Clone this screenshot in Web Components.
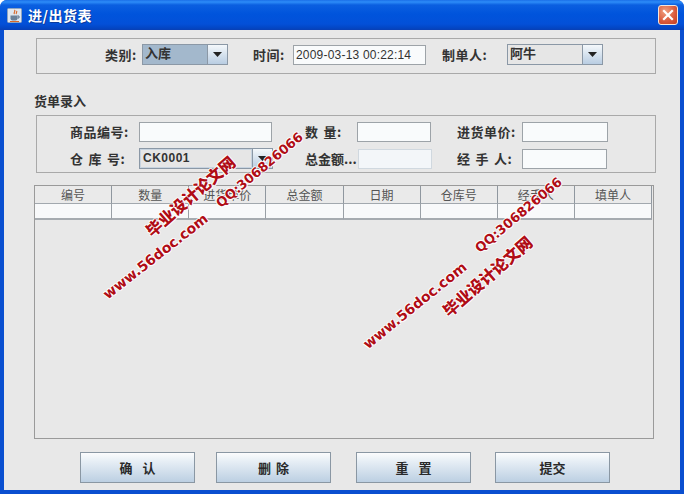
<!DOCTYPE html>
<html lang="zh">
<head>
<meta charset="utf-8">
<title>进/出货表</title>
<style>
  html, body { margin: 0; height: 100%; background: #fff; overflow: hidden; }
  body { font-family: "Noto Sans CJK SC", "Liberation Sans", sans-serif; font-size: 12px; color: #222; }

  /* where things sit in the form */
  .top-panel { margin: 8px 0 0 32px; width: 620px; height: 36px; padding-bottom: 3px;
    grid-template-columns: 68px 37px 86px 25px 40px 133px 16px 65px 96px; align-items: center; }
  .heading { margin: 19px 0 0 30px; font-weight: 700; font-size: 13px; line-height: 16px; color: #333; display: block; }
  .entry-panel { margin: 6px 0 0 32px; width: 620px; height: 58px; padding-top: 6px; row-gap: 6px; align-content: start;
    grid-template-columns: 33px 69px 134px 32px 52px 74px 26px 65px 86px; align-items: center; }
  .entry-panel > :first-child, .entry-panel > .r2 { grid-column-start: 2; }
  erp-table { margin: 12px 0 0 30px; width: 620px; height: 254px; }
  .actions { display: grid; grid-template-columns: 136px 140px 139px 115px; margin: 13px 0 0 76px; }
</style>
</head>
<body>
<erp-window caption="进/出货表">
  <erp-panel class="top-panel">
    <span></span>
    <erp-label>类别:</erp-label>
    <erp-combo arrow selected>入库</erp-combo>
    <span></span>
    <erp-label>时间:</erp-label>
    <erp-field mono>2009-03-13 00:22:14</erp-field>
    <span></span>
    <erp-label>制单人:</erp-label>
    <erp-combo arrow>阿牛</erp-combo>
  </erp-panel>

  <span class="heading">货单录入</span>

  <erp-panel class="entry-panel">
    <erp-label>商品编号:</erp-label>
    <erp-field style="width:133px"></erp-field>
    <span></span>
    <erp-label>数 量:</erp-label>
    <erp-field style="width:74px"></erp-field>
    <span></span>
    <erp-label>进货单价:</erp-label>
    <erp-field style="width:86px"></erp-field>

    <erp-label class="r2">仓 库 号:</erp-label>
    <erp-combo arrow plain style="width:134px">CK0001</erp-combo>
    <span></span>
    <erp-label style="--ls:0">总金额...</erp-label>
    <erp-field disabled style="width:74px;margin-left:1px"></erp-field>
    <span></span>
    <erp-label>经 手 人:</erp-label>
    <erp-field style="width:85px"></erp-field>
  </erp-panel>

  <erp-table columns="编号,数量,进货单价,总金额,日期,仓库号,经手人,填单人"></erp-table>

  <div class="actions">
    <erp-button>确  认</erp-button>
    <erp-button>删 除</erp-button>
    <erp-button>重  置</erp-button>
    <erp-button>提交</erp-button>
  </div>
</erp-window>

<erp-watermark x="148" y="233" size="16" angle="41" cjk>毕业设计论文网</erp-watermark>
<erp-watermark x="218" y="205" size="13" angle="40" bold>QQ:306826066</erp-watermark>
<erp-watermark x="105" y="296" size="14" angle="38" bold>www.56doc.com</erp-watermark>
<erp-watermark x="365" y="346" size="14" angle="39" bold>www.56doc.com</erp-watermark>
<erp-watermark x="477" y="250" size="13" angle="40" bold>QQ:306826066</erp-watermark>
<erp-watermark x="445" y="313" size="16" angle="41" cjk>毕业设计论文网</erp-watermark>

<script>
class ErpWindow extends HTMLElement {
  connectedCallback() {
    this.attachShadow({ mode: 'open' }).innerHTML = `
      <style>
        :host { display: flex; flex-direction: column; width: 684px; height: 494px; box-sizing: border-box;
          border-radius: 7px 7px 0 0; overflow: hidden; background: #0a4fd0; }
        .bar { display: flex; align-items: center; height: 30px; flex: none; padding: 0 6px 0 7px; gap: 6px;
          background: linear-gradient(#1b6fe8 0, #2d8cf8 2px, #0b5fe0 5px, #0054dc 14px, #0350d8 24px, #0346c4 28px, #0a3fb4 30px); }
        .title { color: #fff; font-weight: 700; font-size: 14px; letter-spacing: .5px; line-height: 16px; flex: 1; text-shadow: 1px 1px 0 #0a3a9c; }
        .close { width: 20px; height: 20px; box-sizing: border-box; border: 1px solid #f4e6dc; border-radius: 3px;
          background: radial-gradient(circle at 35% 30%, #f0a080, #d9583a 60%, #c23f20); display: grid; place-items: center; }
        .body { flex: 1; display: flex; flex-direction: column; margin: 0 4px 4px; background: #e8e8e8; min-height: 0; }
      </style>
      <div class="bar">
        <svg width="15" height="15" viewBox="0 0 15 15">
          <rect x="0.500" y="0.500" width="14" height="14" rx="1" fill="#dfe6ee" stroke="#8ea4c0"/>
          <path d="M7.500 2c1.500 1.500-1.500 2.500 0 4M9.500 3c1 1-1 2 0 3" fill="none" stroke="#d8692a" stroke-width="1.200"/>
          <path d="M3.500 7.500h7v3a2 2 0 0 1-2 2h-3a2 2 0 0 1-2-2z" fill="#6c8198"/>
          <path d="M10.500 8h1.500v2h-1.500" fill="none" stroke="#5a6f86"/>
          <path d="M3 13.500h9" stroke="#d8692a"/>
        </svg>
        <div class="title"></div>
        <div class="close">
          <svg width="12" height="12" viewBox="0 0 12 12"><path d="M2 2l8 8M10 2l-8 8" stroke="#fff" stroke-width="2.200" stroke-linecap="square"/></svg>
        </div>
      </div>
      <div class="body"><slot></slot></div>`;
    this.shadowRoot.querySelector('.title').textContent = this.getAttribute('caption');
  }
}

class ErpPanel extends HTMLElement {
  connectedCallback() {
    this.attachShadow({ mode: 'open' }).innerHTML = `
      <style>
        :host { display: grid; box-sizing: border-box; border: 1px solid #a9a9a9; }
      </style>
      <slot></slot>`;
  }
}

class ErpLabel extends HTMLElement {
  connectedCallback() {
    this.attachShadow({ mode: 'open' }).innerHTML = `
      <style>
        :host { display: block; font-size: 13px; font-weight: 700; color: #333; line-height: 16px; }
        span { white-space: pre; letter-spacing: var(--ls, .5px); word-spacing: 1.500px; }
      </style>
      <span><slot></slot></span>`;
  }
}

class ErpField extends HTMLElement {
  connectedCallback() {
    this.attachShadow({ mode: 'open' }).innerHTML = `
      <style>
        :host { display: block; box-sizing: border-box; height: 20px; padding: 0 2px; border: 1px solid #9da3a8;
          background: #f9fbfc; font: 12px/18px "Liberation Sans", sans-serif; color: #333; letter-spacing: .2px; }
        :host([disabled]) { border-color: #d0d8df; background: #f3f6f9; }
      </style>
      <slot></slot>`;
  }
}

class ErpCombo extends HTMLElement {
  connectedCallback() {
    this.attachShadow({ mode: 'open' }).innerHTML = `
      <style>
        :host { display: flex; box-sizing: border-box; height: 21px; border: 1px solid #8b98a6; background: #e6e6e6; }
        :host([selected]) .value { background: #a3b8cc; }
        :host([plain]) .value { font-family: "Liberation Sans", sans-serif; font-size: 12px; letter-spacing: .5px; border: 1px solid #c8d4e0; line-height: 17px; }
        .value { flex: 1; min-width: 0; padding: 0 2px; font-size: 13px; font-weight: 700; line-height: 16px; color: #333; }
        .btn { flex: none; width: 19px; border-left: 1px solid #8b98a6; display: grid; place-items: center;
          background: linear-gradient(#f4f8fb, #b9cde2); }
      </style>
      <div class="value"><slot></slot></div>
      <div class="btn"><svg width="9" height="5" viewBox="0 0 9 5"><path d="M0 0h9L4.500 5z" fill="#222"/></svg></div>`;
  }
}

class ErpTable extends HTMLElement {
  connectedCallback() {
    const cols = this.getAttribute('columns').split(',');
    const cells = cols.map((c) => `<div class="head">${c}</div>`).join('');
    const blanks = cols.map(() => '<div class="cell"></div>').join('');
    this.attachShadow({ mode: 'open' }).innerHTML = `
      <style>
        :host { display: block; box-sizing: border-box; border: 1px solid #9a9a9a; background: #e8e8e8; }
        .grid { display: grid; grid-template-columns: repeat(8, 77.125px); grid-template-rows: 18px 16px; }
        .head { box-sizing: border-box; border-right: 1px solid #8f979f; border-bottom: 1px solid #a2a8ae;
          background: #eaeaea; text-align: center; font-size: 12px; line-height: 17px; color: #555; }
        .cell { box-sizing: border-box; border-right: 1px solid #9aa0a6; border-bottom: 2px solid #a6abb0; background: #f8f9fa; }
      </style>
      <div class="grid">${cells}${blanks}</div>`;
  }
}

class ErpButton extends HTMLElement {
  connectedCallback() {
    this.attachShadow({ mode: 'open' }).innerHTML = `
      <style>
        :host { display: flex; align-items: center; justify-content: center; box-sizing: border-box; width: 115px; height: 31px;
          border: 1px solid #8a97a3; background: linear-gradient(#fbfcfd 0, #e6eef5 30%, #bccfe2 100%);
          font-size: 13px; font-weight: 700; color: #2a2a2a; }
        span { white-space: pre; word-spacing: 2px; }
      </style>
      <span><slot></slot></span>`;
  }
}

// red stamp text lying over the finished window
class ErpWatermark extends HTMLElement {
  connectedCallback() {
    const size = this.getAttribute('size');
    this.attachShadow({ mode: 'open' }).innerHTML = `
      <style>
        :host { position: absolute; left: ${this.getAttribute('x')}px; top: ${this.getAttribute('y')}px;
          transform-origin: 0 50%; transform: translateY(-50%) rotate(-${this.getAttribute('angle')}deg); white-space: nowrap; pointer-events: none;
          font: ${size}px/1.2 "DejaVu Sans", sans-serif; color: #b00d16;
          text-shadow: 1px 0 0 #fff, -1px 0 0 #fff, 0 1px 0 #fff, 0 -1px 0 #fff; }
        :host([bold]) { font-weight: 700; }
        :host([cjk]) { font-family: "Noto Sans CJK SC", sans-serif; font-weight: 900; }
      </style>
      <slot></slot>`;
  }
}

customElements.define('erp-window', ErpWindow);
customElements.define('erp-panel', ErpPanel);
customElements.define('erp-label', ErpLabel);
customElements.define('erp-field', ErpField);
customElements.define('erp-combo', ErpCombo);
customElements.define('erp-table', ErpTable);
customElements.define('erp-button', ErpButton);
customElements.define('erp-watermark', ErpWatermark);
</script>
</body>
</html>
